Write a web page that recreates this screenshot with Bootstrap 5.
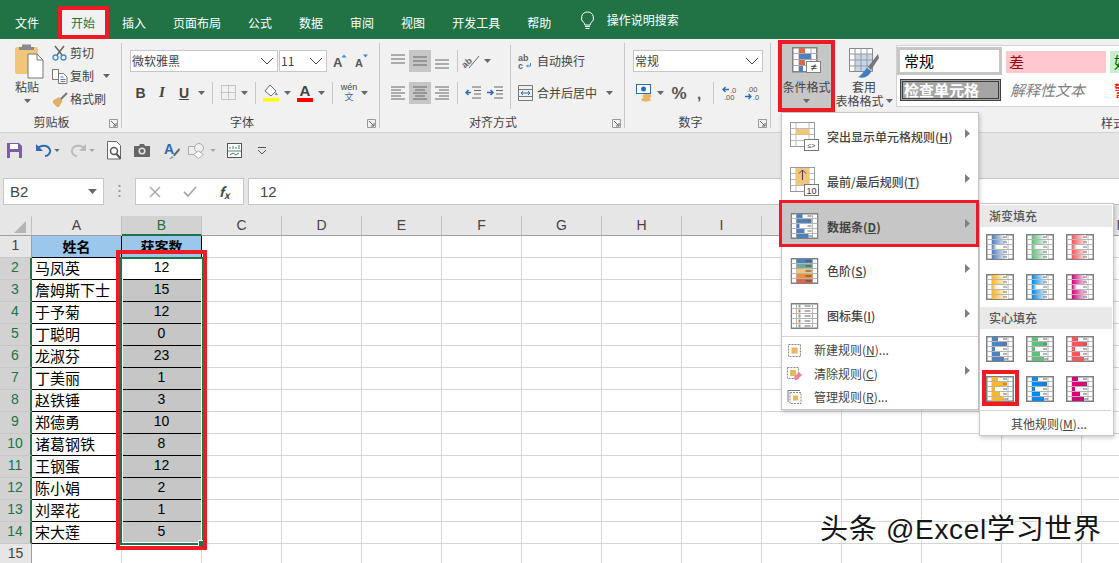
<!DOCTYPE html>
<html lang="zh-CN"><head><meta charset="utf-8"><title>Excel 条件格式</title>
<link href="https://cdn.jsdelivr.net/npm/bootstrap@5.3.0/dist/css/bootstrap.min.css" rel="stylesheet">
<style>
html,body{margin:0;width:1119px;height:563px;overflow:hidden;background:#fff}
body{font:12px/16px "Noto Sans CJK SC","Liberation Sans",sans-serif;color:#444;position:relative}
svg{display:block;flex:none;overflow:visible}
u{text-underline-offset:1px}
.ctr{display:flex;align-items:center;justify-content:center;min-width:0;white-space:nowrap}
.tabbar{height:39px;background:#217346;padding-left:1.5px;color:#fff;align-items:flex-end}
.rtab{height:33px;padding:0 13.5px;line-height:33px;white-space:nowrap}
.rtab.first{margin-right:5px}
.rtab.on{background:#f1f1f1;color:#217346;box-shadow:inset 0 0 0 4px #ed1c24}
.bulb{margin:0 12px 0 15px;align-self:center}
.ribbon{height:94px;background:#f1f1f1;padding-top:4px;border-bottom:1px solid #d0d0d0;overflow:hidden}
.rg{height:85px;border-right:1px solid #c6c6c6;flex:none}
.g1{width:122px}.g2{width:258px}.g3{width:245px}.g4{width:146px}
.rlab{height:16px;line-height:20px;margin-top:auto}
.rlab b{font-weight:400;flex:1;text-align:center}
.g1 .rlab b{padding-right:6px}.g2 .rlab b{padding-right:5px}.g3 .rlab b{padding-right:6px}.g4 .rlab b{padding-right:2px}
.rlab svg{margin:7px 3px 0 0}
.pastec{width:52px;padding-left:2px}
.cliprows{margin-top:-1.5px}
.cliprow{height:23px;display:grid;grid-template-columns:16px 28px 12px;column-gap:2px;align-items:center;justify-items:start;white-space:nowrap}
.cliprow svg:last-child{justify-self:center}
.rowf1{height:22px;margin:7px 0 0 8px;align-items:center}
.combo{height:22px;background:#fff;border:1px solid #c6c6c6;display:flex;align-items:center;justify-content:space-between;padding:0 3px 0 1px;color:#444;white-space:nowrap}
.cb1{width:148px}.cb2{width:48px;margin-left:1px}.cb3{width:130px}
.aup{margin-left:6px}.adn{margin-left:8px}
.rowf2{margin:8px 0 0 8px;display:grid;grid-template-columns:21px 22px 22px 12px 10px 22px 10px 12px 20px 12px 24px 8px 14px 20px 10px;grid-template-rows:25px;height:25px}
.bt{font:700 14px/1 "Liberation Sans",sans-serif;color:#444}
.bt.it{font-style:italic;font-family:"Liberation Serif",serif;font-size:15px}
.bt.un{text-decoration:underline}
.sp1{width:1px;height:22px;background:#c6c6c6;display:block;flex:none}
.sp2{height:32px}
.wen{font:9px/9px "Liberation Sans",sans-serif;text-align:center;color:#444}
.wen i{font:9px/10px "Noto Sans CJK SC",sans-serif;color:#2b6cb0;display:block;font-style:normal}
.fa{font:700 15px/15px "Liberation Sans",sans-serif;color:#444;text-align:center;display:block}
.rowa1,.rowa2{margin-left:7px;display:grid;height:22px;grid-template-rows:22px}
.rowa1{margin-top:7px;grid-template-columns:22px 22px 22px 8px 20px 12px 12px 10px 20px auto}
.rowa2{margin-top:10px;grid-template-columns:22px 22px 22px 8px 24px 20px 10px 20px 62px 24px}
.rowa1 .txt,.rowa2 .txt{padding-left:2px;justify-content:flex-start}
.selb{background:#c6c6c6}
.rown1{margin:7px 0 0 8px}
.rown2{margin:10px 0 0 8px;display:grid;height:22px;grid-template-rows:22px;grid-template-columns:22px 10px 28px 12px 17px 16px 6px 16px}
.pct{font:700 17px/1 "Liberation Sans",sans-serif;color:#555}
.cmm{font:700 15px/1 "Liberation Sans",sans-serif;color:#555}
.gs{flex:1;min-width:0;position:relative}
.stylerow{height:85px;align-items:flex-start}
.bigb{width:57px;flex:none;display:flex;flex-direction:column;align-items:center}
.cfb{margin:-3px 0 0 7px;height:72px;background:#c6c6c6;box-shadow:inset 0 0 0 4px #ed1c24;padding-top:7px}
.tfb{margin:-3px 0 0 0;width:58px;height:72px;padding-top:8px;white-space:nowrap}
.cfb .lb1{margin-top:6px}
.tfb .lb1{line-height:14px;margin-top:1px}
.cfb svg.cr{margin-top:4px}
.tfb .lb2{display:flex;align-items:center;gap:2px;line-height:14px}
.gal{margin:2px 0 0 3px;flex:1;height:62px;background:#fff;border:1px solid #d0d0d0;border-right:0;overflow:hidden;display:grid;grid-template-columns:105px 100px 60px;grid-template-rows:33px 27px;column-gap:4px;font-size:15px;white-space:nowrap}
.gal>div{display:flex;align-items:center}
.s-n{margin:1px 0 0 0;height:28px;background:#fff;border:3px solid #c6c6c6;padding-left:4px;color:#000}
.s-bad{margin-top:5px;height:22px;background:#ffc7ce;color:#9c0006;padding-left:3px}
.s-good{margin-top:5px;height:22px;background:#c6efce;color:#006100;padding-left:4px}
.s-chk{margin:0 1px 0 3px;height:22px;background:#a5a5a5;color:#fff;font-weight:700;border:3px double #3f3f3f;padding-left:1px}
.s-note{font-style:italic;color:#7f7f7f;padding-left:4px;height:22px}
.s-warn{color:#f00;padding-left:4px;height:22px}
.stylab{position:absolute;left:330px;top:72px;line-height:16px;width:18px;overflow:hidden;white-space:nowrap}
.graybar{background:#e6e6e6;height:83px}
.qat{height:35px;display:grid;grid-template-columns:28px 4px 22px 6px 7px 22px 6px 7px 24px 4px 24px 6px 24px 1px 24px 7px 6px 24px 4px 24px;align-items:center}
.fbar{height:27px;margin-top:10px;padding-left:3px;font-size:15px}
.nbox{width:101px;background:#fff;border:1px solid #c6c6c6;padding:0 6px;font:15px "Liberation Sans",sans-serif;color:#444;justify-content:space-between}
.dots{width:31px}
.fxbox{width:109px;background:#fff;border:1px solid #c6c6c6;padding-left:13px;gap:22px;justify-content:flex-start}
.finput{margin-left:4px;flex:1;background:#fff;border:1px solid #c6c6c6;border-right:0;padding-left:11px;font:15px "Liberation Sans",sans-serif;color:#444;justify-content:flex-start}
.sheet{position:relative;height:347px;overflow:hidden}
.xl{table-layout:fixed;width:1162px;border-collapse:separate;border-spacing:0;font:14px "Liberation Sans",sans-serif;color:#000}
.xl th,.xl td{height:22px;padding:0 0 2px;border-right:1px solid #d4d4d4;border-bottom:1px solid #d4d4d4;text-align:center;overflow:hidden;white-space:nowrap;font-weight:400;line-height:19px}
.xl thead th{height:20px;padding:0;background:#e6e6e6;color:#444;border-right:1px solid #c0c0c0;border-bottom:1px solid #9f9f9f;line-height:19px}
.xl thead th.sel{background:#d2d2d2;color:#217346;border-bottom:2px solid #217346;line-height:18px}
.xl tbody th{background:#e6e6e6;color:#444;border-right:1px solid #9f9f9f;border-bottom:1px solid #c8c8c8}
.xl tbody th.sel{background:#d2d2d2;color:#217346;border-right:2px solid #217346}
.xl td.u{border-color:#000}
.xl td.nm{font:15px/19px "Noto Sans CJK SC",sans-serif;text-align:left;padding-left:3px}
.xl td.hd{background:#9bc7ec;padding:0;font:700 14px/19px "Noto Sans CJK SC",sans-serif}
.xl td.g{background:#c6c6c6}
.corner{background:#e6e6e6}
.greenbox{position:absolute;left:120px;top:41px;width:84px;height:288px;border:2px solid #217346;box-shadow:inset 0 0 0 1px #fff;pointer-events:none}
.redbox{position:absolute;left:116px;top:34px;width:91px;height:300px;border:4px solid #ed1c24}
.grip{position:absolute;left:199px;top:325px;width:6px;height:6px;background:#217346;outline:1px solid #fff}
.cfmenu{position:absolute;left:781px;top:112px;width:198px;height:298px;background:#fff;border:1px solid #c6c6c6;box-shadow:1px 2px 4px rgba(0,0,0,.2);padding-top:1.5px;z-index:5}
.mbig{height:44.8px;display:flex;align-items:center;position:relative;padding-left:8px;white-space:nowrap}
.mbig>*{position:relative;z-index:1}
.mbig .tx{width:0;flex:1;padding-left:8px;font-weight:500}
.mhi .tx{font-weight:700;padding-top:1px}
.mbig>svg:first-child{width:29px}
.ar{margin:-6px 8px 0 0}
.mhi::before{content:"";position:absolute;z-index:0;left:-3px;right:-1px;top:-4px;bottom:2px;background:#c6c6c6;border:3px solid #ed1c24}
.msep{height:1px;background:#d4d4d4;margin:-2px 0 1px}
.msm{height:23.5px;display:flex;align-items:center;padding-left:5px;white-space:nowrap}
.msm .tx{flex:1;padding-left:12px}
.msm>svg:first-child{width:15px}
.submenu{position:absolute;left:979px;top:203px;width:135px;height:233px;background:#fff;border:1px solid #c6c6c6;box-shadow:1px 2px 4px rgba(0,0,0,.2);z-index:6;padding:1px}
.shead{height:22px;width:132px;background:#e9e9e9;line-height:22px;padding-left:9px;color:#555;margin-left:-1px;font-weight:500}
.dgrid{display:grid;grid-template-columns:repeat(3,28px);column-gap:12px;row-gap:14px;padding:7px 0 7px 5px}
.pick{position:relative}
.pick::after{content:"";position:absolute;left:-4px;top:-6px;width:37px;height:36px;border:4px solid #ed1c24}
.more{border-top:1px solid #d4d4d4;margin:1px 1px 0 -1px;height:25px;line-height:25px;padding-left:31px;white-space:nowrap}
.wm{position:absolute;left:820px;top:512px;font:28px/36px "Liberation Sans","Noto Sans CJK SC",sans-serif;letter-spacing:.7px;color:#151515;white-space:nowrap;z-index:7;text-shadow:1px 1px 0 #fff,-1px 1px 0 #fff,1px -1px 0 #fff,-1px -1px 0 #fff}
.bf{fill:var(--bf)}
.f-b{--bf:#4f81bd}.f-g{--bf:#63be7b}.f-r{--bf:#ff555a}.f-o{--bf:#ffb628}.f-c{--bf:#008aef}.f-m{--bf:#d6007b}
.g-b{--bf:url(#gb)}.g-g{--bf:url(#gg)}.g-r{--bf:url(#gr)}.g-o{--bf:url(#go)}.g-c{--bf:url(#gc)}.g-m{--bf:url(#gm)}
</style></head><body>

<svg width="0" height="0" class="d-block"><defs>
<linearGradient id="gb"><stop offset="0" stop-color="#4f81bd"/><stop offset="1" stop-color="#fff"/></linearGradient>
<linearGradient id="gg"><stop offset="0" stop-color="#63be7b"/><stop offset="1" stop-color="#fff"/></linearGradient>
<linearGradient id="gr"><stop offset="0" stop-color="#ff555a"/><stop offset="1" stop-color="#fff"/></linearGradient>
<linearGradient id="go"><stop offset="0" stop-color="#ffb628"/><stop offset="1" stop-color="#fff"/></linearGradient>
<linearGradient id="gc"><stop offset="0" stop-color="#008aef"/><stop offset="1" stop-color="#fff"/></linearGradient>
<linearGradient id="gm"><stop offset="0" stop-color="#d6007b"/><stop offset="1" stop-color="#fff"/></linearGradient>
<symbol id="gridb" viewBox="0 0 28 26"><rect x=".75" y=".75" width="26.5" height="24.5" fill="#fff" stroke="#808080" stroke-width="1.5"/><path d="M6 1v24M22 1v24M1 5.5h26M1 10.5h26M1 15.5h26M1 20.5h26" stroke="#b5b5b5" fill="none"/></symbol>
<symbol id="db" viewBox="0 0 28 26"><use href="#gridb"/><rect class="bf" x="6" y="1" width="6" height="4"/><rect class="bf" x="6" y="6" width="15" height="4"/><rect class="bf" x="6" y="11" width="3" height="4"/><rect class="bf" x="6" y="16" width="8" height="4"/><rect class="bf" x="6" y="21" width="12" height="4"/><path d="M17 3h4M17 8h4M17 13h4M17 18h4M18 23h4" stroke="#666" fill="none"/></symbol>
<symbol id="dg" viewBox="0 0 28 26"><use href="#gridb"/><rect class="bf" x="6" y="1" width="14" height="4"/><rect class="bf" x="6" y="6" width="16" height="4"/><rect class="bf" x="6" y="11" width="5" height="4"/><rect class="bf" x="6" y="16" width="16" height="4"/><rect class="bf" x="6" y="21" width="16" height="4"/><path d="M17 3h4M17 8h4M17 13h4M17 18h4M17 23h4" stroke="#777" fill="none"/></symbol>
<symbol id="caret" viewBox="0 0 7 4"><path d="M0 0h7L3.5 4z" fill="#666"/></symbol>
<symbol id="chev" viewBox="0 0 14 8"><path d="M1 1l6 6 6-6" fill="none" stroke="#444"/></symbol>
<symbol id="laun" viewBox="0 0 9 9"><path d="M.5 8.5V.5h8v8z" fill="none" stroke="#999"/><path d="M2 2l5 5M7 4v3H4" fill="none" stroke="#666"/></symbol>
<symbol id="ar" viewBox="0 0 5 9"><path d="M0 0l5 4.500-5 4.500z" fill="#808080"/></symbol>
<symbol id="al" viewBox="0 0 16 16"><path d="M1 2h14M1 6h14M1 10h14" stroke="#666" fill="none"/></symbol>
<symbol id="am" viewBox="0 0 16 16"><path d="M1 4h14M1 8h14M1 12h14" stroke="#666" fill="none"/></symbol>
<symbol id="ab" viewBox="0 0 16 16"><path d="M1 7h14M1 11h14M1 15h14" stroke="#666" fill="none"/></symbol>
<symbol id="hl" viewBox="0 0 16 14"><path d="M1 1h14M1 4h10M1 7h14M1 10h10M1 13h14" stroke="#666" fill="none"/></symbol>
<symbol id="hc" viewBox="0 0 16 14"><path d="M1 1h14M3 4h10M1 7h14M3 10h10M1 13h14" stroke="#666" fill="none"/></symbol>
<symbol id="hr" viewBox="0 0 16 14"><path d="M1 1h14M5 4h10M1 7h14M5 10h10M1 13h14" stroke="#666" fill="none"/></symbol>
</defs></svg>

<div class="d-flex tabbar">
  <div class="rtab first">文件</div><div class="rtab on">开始</div><div class="rtab">插入</div><div class="rtab">页面布局</div><div class="rtab">公式</div><div class="rtab">数据</div><div class="rtab">审阅</div><div class="rtab">视图</div><div class="rtab">开发工具</div><div class="rtab">帮助</div>
  <svg class="bulb" width="15" height="18" viewBox="0 0 15 18"><path d="M7.5 1a6 6 0 0 0-3.5 10.9c.6.6.8 1.2.8 2.1h5.4c0-.9.2-1.500.8-2.100A6 6 0 0 0 7.500 1z" fill="none" stroke="#fff"/><path d="M5 15.500h5M5.500 17.500h4" stroke="#fff"/></svg>
  <div class="align-self-center text-nowrap pt-1 pb-1">操作说明搜索</div>
</div>

<div class="ribbon d-flex">
  <div class="rg g1 d-flex flex-column">
    <div class="d-flex">
      <div class="pastec d-flex flex-column align-items-center">
        <svg class="ms-1" width="30" height="36" viewBox="0 0 30 36"><rect x="1" y="4" width="23" height="27" rx="2" fill="#f1c67a"/><path d="M8 4V1.500h9V4h3v3H5V4z" fill="#8a8a8a"/><path d="M14 11h9l6 6v18H14z" fill="#fff" stroke="#777"/><path d="M23 11v6h6" fill="none" stroke="#777"/></svg>
        <span>粘贴</span>
        <svg class="mt-1" width="7" height="4"><use href="#caret"/></svg>
      </div>
      <div class="cliprows">
        <div class="cliprow"><svg width="15" height="16" viewBox="0 0 15 16"><path d="M3 1l7 9M12 1L5 10" stroke="#666" stroke-width="1.500" fill="none"/><circle cx="3.500" cy="12.500" r="2.500" fill="none" stroke="#4a86c5" stroke-width="1.300"/><circle cx="11.500" cy="12.500" r="2.500" fill="none" stroke="#4a86c5" stroke-width="1.300"/></svg><span>剪切</span><i></i></div>
        <div class="cliprow"><svg width="16" height="15" viewBox="0 0 16 15"><path d="M.5.500h6v10h-6z" fill="#fff" stroke="#777"/><path d="M6.500 4.500h5l3.500 3.500v6.500H6.500z" fill="#fff" stroke="#777"/><path d="M8.500 8h3M8.500 10.500h5M8.500 12.500h5" stroke="#4a86c5"/></svg><span>复制</span><svg width="7" height="4"><use href="#caret"/></svg></div>
        <div class="cliprow"><svg width="16" height="15" viewBox="0 0 16 15"><path d="M8.500 7.500L15 1" stroke="#777" stroke-width="2"/><path d="M1 8.500L7 5l3.500 4L7 15H5L1 11z" fill="#ddb06a"/></svg><span>格式刷</span><i></i></div>
      </div>
    </div>
    <div class="rlab d-flex"><b>剪贴板</b><svg width="9" height="9"><use href="#laun"/></svg></div>
  </div>

  <div class="rg g2 d-flex flex-column">
    <div class="d-flex rowf1">
      <div class="combo cb1">微软雅黑<svg width="14" height="8"><use href="#chev"/></svg></div>
      <div class="combo cb2"><span class="fnum">11</span><svg width="14" height="8"><use href="#chev"/></svg></div>
      <svg class="aup" width="14" height="14" viewBox="0 0 14 14"><path d="M9 .5l2.500 3h-5z" fill="#4a86c5" transform="translate(2)"/><text x="0" y="13" font-family="Liberation Sans" font-weight="700" font-size="13" fill="#555">A</text></svg>
      <svg class="adn" width="13" height="14" viewBox="0 0 13 14"><path d="M8 .5h5l-2.500 3z" fill="#4a86c5"/><text x="0" y="13" font-family="Liberation Sans" font-weight="700" font-size="11" fill="#555">A</text></svg>
    </div>
    <div class="rowf2">
      <span class="ctr bt">B</span><span class="ctr bt it">I</span><span class="ctr bt un">U</span>
      <span class="ctr"><svg width="7" height="4"><use href="#caret"/></svg></span><span class="ctr"><i class="sp1"></i></span>
      <span class="ctr"><svg width="15" height="15" viewBox="0 0 15 15"><path d="M.5.500h14v14H.500zM7.500.500v14M.500 7.500h14" fill="none" stroke="#999" stroke-dasharray="1 1"/></svg></span>
      <span class="ctr"><svg width="7" height="4"><use href="#caret"/></svg></span><span class="ctr"><i class="sp1"></i></span>
      <span class="ctr"><svg width="17" height="19" viewBox="0 0 17 19"><path d="M2 8l5-6 6 6-5 5z" fill="#fff" stroke="#666"/><path d="M13 9l2 3h-3z" fill="#4a86c5"/><rect y="15" width="16" height="3.500" fill="#ff0"/></svg></span>
      <span class="ctr"><svg width="7" height="4"><use href="#caret"/></svg></span>
      <span class="ctr"><span class="fa">A<svg width="16" height="4"><rect width="16" height="4" fill="#f00"/></svg></span></span>
      <span class="ctr"><svg width="7" height="4"><use href="#caret"/></svg></span><span class="ctr"><i class="sp1"></i></span>
      <span class="ctr"><span class="wen">wén<i>文</i></span></span>
      <span class="ctr"><svg width="7" height="4"><use href="#caret"/></svg></span>
    </div>
    <div class="rlab d-flex"><b>字体</b><svg width="9" height="9"><use href="#laun"/></svg></div>
  </div>

  <div class="rg g3 d-flex flex-column">
    <div class="rowa1">
      <span class="ctr"><svg width="16" height="16"><use href="#al"/></svg></span><span class="ctr selb"><svg width="16" height="16"><use href="#am"/></svg></span><span class="ctr"><svg width="16" height="16"><use href="#ab"/></svg></span>
      <span class="ctr"><i class="sp1"></i></span>
      <span class="ctr"><svg width="18" height="16" viewBox="0 0 18 16"><text x="0" y="12" font-family="Liberation Sans" font-weight="700" font-size="9" fill="#666" transform="rotate(-40 6 10)">ab</text><path d="M7 15L17 3" stroke="#666" fill="none"/></svg></span>
      <span class="ctr"><svg width="7" height="4"><use href="#caret"/></svg></span><span></span>
      <span class="ctr"><i class="sp1 sp2"></i></span>
      <span class="ctr"><svg width="14" height="17" viewBox="0 0 14 17"><text x="0" y="8" font-family="Liberation Sans" font-weight="700" font-size="9" fill="#666">ab</text><text x="0" y="16" font-family="Liberation Sans" font-weight="700" font-size="9" fill="#666">c</text><path d="M12.500 10v3H9M10 11.500L8.500 13l1.500 1.500" fill="none" stroke="#4a86c5"/></svg></span>
      <span class="ctr txt">自动换行</span>
    </div>
    <div class="rowa2">
      <span class="ctr"><svg width="16" height="14"><use href="#hl"/></svg></span><span class="ctr selb"><svg width="16" height="14"><use href="#hc"/></svg></span><span class="ctr"><svg width="16" height="14"><use href="#hr"/></svg></span>
      <span class="ctr"><i class="sp1"></i></span>
      <span class="ctr"><svg width="16" height="14" viewBox="0 0 16 14"><path d="M7 1h9M9 4.500h7M9 8h7M7 12h9" stroke="#666" fill="none"/><path d="M6 6.500H1M3.500 4L1 6.500 3.500 9" stroke="#2b6cb0" stroke-width="1.500" fill="none"/></svg></span>
      <span class="ctr"><svg width="16" height="14" viewBox="0 0 16 14"><path d="M7 1h9M9 4.500h7M9 8h7M7 12h9" stroke="#666" fill="none"/><path d="M0 6.500h6M3.500 4L6 6.500 3.500 9" stroke="#2b6cb0" stroke-width="1.500" fill="none"/></svg></span>
      <span class="ctr"><i class="sp1 sp2"></i></span>
      <span class="ctr"><svg width="15" height="16" viewBox="0 0 15 16"><path d="M.5.500h14v15H.500zM.500 4.500h14M.500 11.500h14" fill="none" stroke="#777"/><path d="M3 8h9M5 6L3 8l2 2M10 6l2 2-2 2" fill="none" stroke="#2b6cb0"/></svg></span>
      <span class="ctr txt">合并后居中</span>
      <span class="ctr"><svg width="7" height="4"><use href="#caret"/></svg></span>
    </div>
    <div class="rlab d-flex"><b>对齐方式</b><svg width="9" height="9"><use href="#laun"/></svg></div>
  </div>

  <div class="rg g4 d-flex flex-column">
    <div class="rown1"><div class="combo cb3">常规<svg width="14" height="8"><use href="#chev"/></svg></div></div>
    <div class="rown2">
      <span class="ctr"><svg width="16" height="18" viewBox="0 0 16 18"><rect x=".5" y=".5" width="14" height="9" fill="#fff" stroke="#2b6cb0"/><circle cx="7.500" cy="5" r="2.500" fill="#2b6cb0"/><ellipse cx="11" cy="12" rx="4.500" ry="2" fill="#e8b65e"/><ellipse cx="10" cy="15.500" rx="4.500" ry="2" fill="#e8b65e"/></svg></span>
      <span class="ctr"><svg width="7" height="4"><use href="#caret"/></svg></span>
      <span class="ctr pct">%</span><span class="ctr cmm">,</span>
      <span class="ctr"><i class="sp1"></i></span>
      <span class="ctr"><svg width="16" height="15" viewBox="0 0 16 15"><path d="M7 3.500H1M3.500 1L1 3.500 3.500 6" fill="none" stroke="#2b6cb0" stroke-width="1.300"/><text x="8" y="7" font-family="Liberation Sans" font-size="7.500" fill="#555">.0</text><text x="2" y="14" font-family="Liberation Sans" font-size="7.500" fill="#555">.00</text></svg></span><span></span>
      <span class="ctr"><svg width="16" height="15" viewBox="0 0 16 15"><path d="M1 10.500h6M4.500 8L7 10.500 4.500 13" fill="none" stroke="#2b6cb0" stroke-width="1.300"/><text x="3" y="6" font-family="Liberation Sans" font-size="7.500" fill="#555">.00</text><text x="9" y="14" font-family="Liberation Sans" font-size="7.500" fill="#555">.0</text></svg></span>
    </div>
    <div class="rlab d-flex"><b>数字</b><svg width="9" height="9"><use href="#laun"/></svg></div>
  </div>

  <div class="gs">
    <div class="d-flex stylerow">
      <div class="bigb cfb">
        <svg width="29" height="26" viewBox="0 0 29 26"><rect x=".75" y=".75" width="24" height="24" fill="#fff" stroke="#808080" stroke-width="1.500"/><path d="M7 1v24M19 1v24M1 6.500h24M1 12.500h24M1 18.500h24" stroke="#aaa" fill="none"/><rect x="7" y="1" width="6" height="5" fill="#d9694a"/><rect x="7" y="7" width="12" height="5" fill="#4f81bd"/><rect x="7" y="13" width="6" height="5" fill="#d9694a"/><rect x="7" y="19" width="4" height="6" fill="#4f81bd"/><rect x="14.500" y="14.500" width="14" height="11" fill="#fff" stroke="#808080"/><text x="21.500" y="24" text-anchor="middle" font-family="Liberation Sans" font-size="11" fill="#333">≠</text></svg>
        <span class="lb1">条件格式</span>
        <svg class="cr" width="7" height="4"><use href="#caret"/></svg>
      </div>
      <div class="bigb tfb">
        <svg width="30" height="31" viewBox="0 0 30 31"><path d="M.5.500h23v23H.500z" fill="#fff" stroke="#888"/><rect x="6" y="6" width="17" height="17" fill="#c6d6ea"/><path d="M6 .500v23M12 .500v23M18 .500v23M.500 6h23M.500 12h23M.500 18h23" stroke="#999" fill="none"/><path d="M29 6L19 19l3 3L30 10z" fill="#777"/><path d="M18 20l4 3c-1 5-7 8-13 6 3-1 5-5 9-9z" fill="#3f7fbf"/></svg>
        <span class="lb1">套用</span>
        <span class="lb2">表格格式<svg width="7" height="4"><use href="#caret"/></svg></span>
      </div>
      <div class="gal">
        <div class="s-n">常规</div><div class="s-bad">差</div><div class="s-good">好</div>
        <div class="s-chk">检查单元格</div><div class="s-note">解释性文本</div><div class="s-warn">警告文本</div>
      </div>
    </div>
    <div class="stylab">样式</div>
  </div>
</div>

<div class="graybar">
  <div class="qat">
    <span class="ctr"><svg width="15" height="15" viewBox="0 0 15 15"><path d="M0 0h12l3 3v12H0z" fill="#7a5ea8"/><rect x="3" y="1" width="8" height="5" fill="#fff"/><rect x="3" y="9" width="9" height="6" fill="#e6e6e6"/></svg></span><span></span>
    <span class="ctr"><svg width="15" height="13" viewBox="0 0 15 13"><path d="M1 5c3-4 11-5 13 1 1 3-2 6-5 6" fill="none" stroke="#2b6cb0" stroke-width="2"/><path d="M0 0v7h7z" fill="#2b6cb0"/></svg></span><span class="ctr"><svg width="6" height="3"><use href="#caret"/></svg></span><span></span>
    <span class="ctr"><svg width="15" height="13" viewBox="0 0 15 13"><path d="M14 5C11 1 3 0 1 6c-1 3 2 6 5 6" fill="none" stroke="#bbb" stroke-width="2"/><path d="M15 0v7H8z" fill="#bbb"/></svg></span><span class="ctr"><svg width="6" height="3" opacity=".5"><use href="#caret"/></svg></span><span></span>
    <span class="ctr"><svg width="15" height="19" viewBox="0 0 15 19"><path d="M.5.500h9l4 4V18H.500z" fill="#fff" stroke="#666"/><circle cx="7" cy="10" r="3.500" fill="#fff" stroke="#555" stroke-width="1.500"/><path d="M9.500 13l4 4.500" stroke="#555" stroke-width="2"/></svg></span><span></span>
    <span class="ctr"><svg width="16" height="13" viewBox="0 0 16 13"><path d="M0 2h5l1-2h4l1 2h5v11H0z" fill="#666"/><circle cx="8" cy="7" r="3.500" fill="#e6e6e6"/><circle cx="8" cy="7" r="2" fill="#666"/></svg></span><span></span>
    <span class="ctr"><svg width="16" height="17" viewBox="0 0 16 17"><text x="0" y="12" font-family="Liberation Sans" font-weight="700" font-size="14" fill="#2b6cb0">A</text><path d="M15 6L9 13l1.500 1.500L16 8z" fill="#666"/><path d="M8 14l2 1.500L7 17H5z" fill="#8ab"/></svg></span><span></span>
    <span class="ctr"><svg width="18" height="16" viewBox="0 0 18 16"><path d="M.5 3.500h9v8h-9z" fill="#eee" stroke="#aaa"/><circle cx="11" cy="5" r="4.500" fill="#eee" stroke="#aaa"/><path d="M10.500 8l5 3.500-5 4-5-4z" fill="#fff" stroke="#aaa"/></svg></span>
    <span class="ctr"><svg width="6" height="3" opacity=".5"><use href="#caret"/></svg></span><span></span>
    <span class="ctr"><svg width="15" height="15" viewBox="0 0 15 15"><rect x=".5" y=".5" width="14" height="14" fill="#fff" stroke="#555"/><path d="M3 6V4M6 6V3M9 6V4M12 6V2" stroke="#2b8a5a"/><path d="M1 8h13" stroke="#777"/><path d="M3 12l3-2 3 2 3-2" stroke="#2b8a5a" fill="none"/></svg></span><span></span>
    <span class="ctr"><svg width="10" height="8" viewBox="0 0 10 8"><path d="M1 .500h8" stroke="#555"/><path d="M1 3l4 4 4-4" fill="none" stroke="#555"/></svg></span>
  </div>
  <div class="d-flex fbar">
    <div class="ctr nbox">B2<svg width="9" height="5"><use href="#caret"/></svg></div>
    <div class="ctr dots"><svg width="3" height="13" viewBox="0 0 3 13"><path d="M1.500 0v2M1.500 5v2M1.500 10v2" stroke="#999" stroke-width="2"/></svg></div>
    <div class="ctr fxbox"><svg width="12" height="12" viewBox="0 0 12 12"><path d="M1 1l10 10M11 1L1 11" stroke="#aaa" stroke-width="1.500"/></svg><svg width="14" height="12" viewBox="0 0 14 12"><path d="M1 6l4 4 8-9" stroke="#aaa" stroke-width="1.800" fill="none"/></svg><span class="fst-italic ms-0 small fw-bold" id="fx">f<sub>x</sub></span></div>
    <div class="ctr finput">12</div>
  </div>
</div>

<div class="sheet">
<table class="xl">
<colgroup><col style="width:32px"><col style="width:90px"><col span="13" style="width:80px"></colgroup>
<thead><tr><th class="corner"><svg width="28" height="18" viewBox="0 0 28 18"><path d="M26 4v12H14z" fill="#b5b5b5"/></svg></th><th>A</th><th class="sel">B</th><th>C</th><th>D</th><th>E</th><th>F</th><th>G</th><th>H</th><th>I</th><th></th><th></th><th></th><th></th><th>N</th></tr></thead>
<tbody>
<tr><th>1</th><td class="u hd">姓名</td><td class="u hd">获客数</td><td></td><td></td><td></td><td></td><td></td><td></td><td></td><td></td><td></td><td></td><td></td><td></td></tr>
<tr><th class="sel">2</th><td class="u nm">马凤英</td><td class="u">12</td><td></td><td></td><td></td><td></td><td></td><td></td><td></td><td></td><td></td><td></td><td></td><td></td></tr>
<tr><th class="sel">3</th><td class="u nm">詹姆斯下士</td><td class="u g">15</td><td></td><td></td><td></td><td></td><td></td><td></td><td></td><td></td><td></td><td></td><td></td><td></td></tr>
<tr><th class="sel">4</th><td class="u nm">于予菊</td><td class="u g">12</td><td></td><td></td><td></td><td></td><td></td><td></td><td></td><td></td><td></td><td></td><td></td><td></td></tr>
<tr><th class="sel">5</th><td class="u nm">丁聪明</td><td class="u g">0</td><td></td><td></td><td></td><td></td><td></td><td></td><td></td><td></td><td></td><td></td><td></td><td></td></tr>
<tr><th class="sel">6</th><td class="u nm">龙淑芬</td><td class="u g">23</td><td></td><td></td><td></td><td></td><td></td><td></td><td></td><td></td><td></td><td></td><td></td><td></td></tr>
<tr><th class="sel">7</th><td class="u nm">丁美丽</td><td class="u g">1</td><td></td><td></td><td></td><td></td><td></td><td></td><td></td><td></td><td></td><td></td><td></td><td></td></tr>
<tr><th class="sel">8</th><td class="u nm">赵铁锤</td><td class="u g">3</td><td></td><td></td><td></td><td></td><td></td><td></td><td></td><td></td><td></td><td></td><td></td><td></td></tr>
<tr><th class="sel">9</th><td class="u nm">郑德勇</td><td class="u g">10</td><td></td><td></td><td></td><td></td><td></td><td></td><td></td><td></td><td></td><td></td><td></td><td></td></tr>
<tr><th class="sel">10</th><td class="u nm">诸葛钢铁</td><td class="u g">8</td><td></td><td></td><td></td><td></td><td></td><td></td><td></td><td></td><td></td><td></td><td></td><td></td></tr>
<tr><th class="sel">11</th><td class="u nm">王钢蛋</td><td class="u g">12</td><td></td><td></td><td></td><td></td><td></td><td></td><td></td><td></td><td></td><td></td><td></td><td></td></tr>
<tr><th class="sel">12</th><td class="u nm">陈小娟</td><td class="u g">2</td><td></td><td></td><td></td><td></td><td></td><td></td><td></td><td></td><td></td><td></td><td></td><td></td></tr>
<tr><th class="sel">13</th><td class="u nm">刘翠花</td><td class="u g">1</td><td></td><td></td><td></td><td></td><td></td><td></td><td></td><td></td><td></td><td></td><td></td><td></td></tr>
<tr><th class="sel">14</th><td class="u nm">宋大莲</td><td class="u g">5</td><td></td><td></td><td></td><td></td><td></td><td></td><td></td><td></td><td></td><td></td><td></td><td></td></tr>
<tr><th>15</th><td></td><td></td><td></td><td></td><td></td><td></td><td></td><td></td><td></td><td></td><td></td><td></td><td></td><td></td></tr>
</tbody></table>
<div class="greenbox"></div><div class="grip"></div><div class="redbox"></div>
</div>

<div class="cfmenu">
  <div class="mbig"><svg width="29" height="29" viewBox="0 0 29 29"><rect x=".5" y=".5" width="24" height="24" fill="#fff" stroke="#999"/><path d="M6 1v23M19 1v23M1 6.500h23M1 12.500h23M1 18.500h23" stroke="#bbb"/><rect x="6" y="7" width="13" height="5.500" fill="#f1c67a"/><rect x="14.500" y="17.500" width="14" height="11" fill="#fff" stroke="#777"/><text x="21.500" y="26" text-anchor="middle" font-family="Liberation Sans" font-size="7" fill="#333">≤&gt;</text></svg><span class="tx">突出显示单元格规则(<u>H</u>)</span><svg class="ar" width="5" height="9"><use href="#ar"/></svg></div>
  <div class="mbig"><svg width="29" height="29" viewBox="0 0 29 29"><rect x=".5" y=".5" width="24" height="24" fill="#fff" stroke="#999"/><path d="M6 1v23M19 1v23M1 6.500h23M1 12.500h23M1 18.500h23" stroke="#bbb"/><rect x="6" y="1" width="13" height="17" fill="#f1c67a"/><path d="M12.500 13V3M9 6.500l3.500-3.500 3.500 3.500" fill="none" stroke="#444"/><rect x="14.500" y="17.500" width="14" height="11" fill="#fff" stroke="#777"/><text x="21.500" y="26.500" text-anchor="middle" font-family="Liberation Sans" font-size="9" fill="#333">10</text></svg><span class="tx">最前/最后规则(<u>T</u>)</span><svg class="ar" width="5" height="9"><use href="#ar"/></svg></div>
  <div class="mbig mhi"><svg class="f-b" width="28" height="26"><use href="#db"/></svg><span class="tx">数据条(<u>D</u>)</span><svg class="ar" width="5" height="9"><use href="#ar"/></svg></div>
  <div class="mbig"><svg width="28" height="26" viewBox="0 0 28 26"><use href="#gridb"/><rect x="6" y="1" width="16" height="4" fill="#4f81bd"/><rect x="6" y="6" width="16" height="4" fill="#73ab98"/><rect x="6" y="11" width="16" height="4" fill="#f1c67a"/><rect x="6" y="16" width="16" height="4" fill="#e8913c"/><rect x="6" y="21" width="16" height="4" fill="#d9694a"/><path d="M15 3h6M15 8h6M15 13h6M15 18h6M15 23h6" stroke="#444"/></svg><span class="tx">色阶(<u>S</u>)</span><svg class="ar" width="5" height="9"><use href="#ar"/></svg></div>
  <div class="mbig"><svg width="28" height="26" viewBox="0 0 28 26"><use href="#gridb"/><path d="M8 3h2M8 13h2M8 23h2" stroke-width="3" stroke="#73ab98"/><path d="M8 8h2M8 18h2" stroke-width="3" stroke="#e8761e"/><path d="M14 3h6M14 8h6M14 13h6M14 18h6M14 23h6" stroke="#666"/></svg><span class="tx">图标集(<u>I</u>)</span><svg class="ar" width="5" height="9"><use href="#ar"/></svg></div>
  <div class="msep"></div>
  <div class="msm"><svg width="13" height="13" viewBox="0 0 13 13"><rect x=".5" y=".5" width="12" height="12" fill="#fff" stroke="#888" stroke-dasharray="2 1"/><rect x="3.500" y="3.500" width="6" height="6" fill="#e8b65e"/></svg><span class="tx">新建规则(<u>N</u>)...</span></div>
  <div class="msm"><svg width="15" height="14" viewBox="0 0 15 14"><rect x=".5" y=".5" width="11" height="11" fill="#fff" stroke="#888" stroke-dasharray="2 1"/><rect x="3" y="3" width="6" height="6" fill="#e8b65e"/><path d="M7 10l5-5 3 3-5 5H8z" fill="#f0829a"/></svg><span class="tx">清除规则(<u>C</u>)</span><svg class="ar" width="5" height="9"><use href="#ar"/></svg></div>
  <div class="msm"><svg width="14" height="14" viewBox="0 0 14 14"><path d="M.5 12V.5h12" fill="none" stroke="#777"/><rect x="2.500" y="2.500" width="11" height="11" fill="#fff" stroke="#888" stroke-dasharray="2 1"/><rect x="5.500" y="5.500" width="5" height="5" fill="#e8b65e"/></svg><span class="tx">管理规则(<u>R</u>)...</span></div>
</div>

<div class="submenu">
  <div class="shead">渐变填充</div>
  <div class="dgrid">
    <svg class="g-b" width="28" height="26"><use href="#dg"/></svg><svg class="g-g" width="28" height="26"><use href="#dg"/></svg><svg class="g-r" width="28" height="26"><use href="#dg"/></svg>
    <svg class="g-o" width="28" height="26"><use href="#dg"/></svg><svg class="g-c" width="28" height="26"><use href="#dg"/></svg><svg class="g-m" width="28" height="26"><use href="#dg"/></svg>
  </div>
  <div class="shead">实心填充</div>
  <div class="dgrid">
    <svg class="f-b" width="28" height="26"><use href="#db"/></svg><svg class="f-g" width="28" height="26"><use href="#db"/></svg><svg class="f-r" width="28" height="26"><use href="#db"/></svg>
    <div class="pick"><svg class="f-o" width="28" height="26"><use href="#db"/></svg></div><svg class="f-c" width="28" height="26"><use href="#db"/></svg><svg class="f-m" width="28" height="26"><use href="#db"/></svg>
  </div>
  <div class="more">其他规则(<u>M</u>)...</div>
</div>

<div class="wm">头条 @Excel学习世界</div>
</body></html>
